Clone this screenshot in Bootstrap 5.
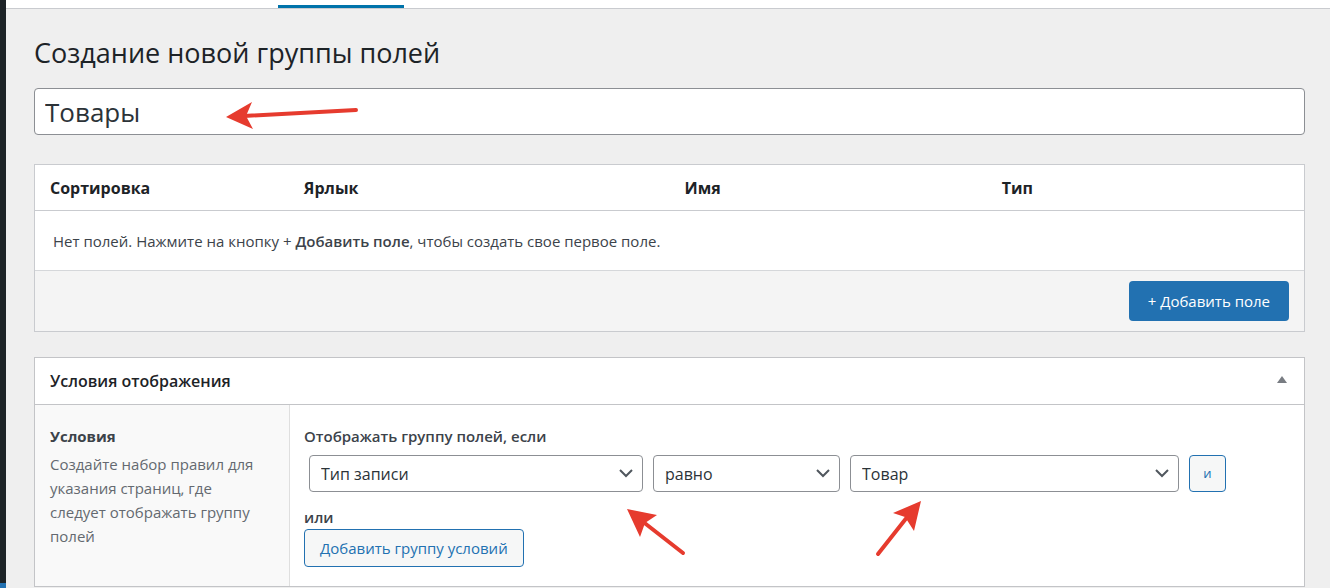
<!DOCTYPE html>
<html lang="ru">
<head>
<meta charset="utf-8">
<meta name="viewport" content="width=device-width, initial-scale=1">
<title>Создание новой группы полей</title>
<link href="https://cdn.jsdelivr.net/npm/bootstrap@5.3.0/dist/css/bootstrap.min.css" rel="stylesheet">
<style>
  body { font-family: "Open Sans", "Noto Sans", sans-serif; font-size: 15px; line-height: 24px; color: #3c434a; background: #efefef; }
  .admin-menu { width: 6px; background: #1d2327; }
  .admin-menu-current { height: 5px; background: #2271b1; }
  .admin-tabs { height: 9px; background: #fff; border-bottom: 1px solid #c9cbcf; padding-left: 272px; }
  .admin-tab { width: 126px; height: 3px; background: #0073aa; }
  .page-body { padding: 26px 25px 0 28px; }
  .page-title { font-size: 27px; line-height: 36px; font-weight: 400; color: #1d2327; margin: 0 0 17px; }
  .title-input { height: 47px; font-size: 26px; line-height: 32px; color: #2c3338; border: 1px solid #8c8f94; border-radius: 4px; padding: 4px 10px; }
  .panel { background: #fff; border: 1px solid #c9cbcf; }
  .panel-fields { margin: 29px 0 25px; }
  .field-table { table-layout: fixed; border-collapse: separate; border-spacing: 0; }
  .field-table th { height: 46px; padding: 0 15px; font-size: 16px; font-weight: 700; color: #1d2327; vertical-align: middle; border-bottom: 1px solid #c9cbcf; }
  .field-table td { height: 60px; padding: 0 18px; vertical-align: middle; border-bottom: 1px solid #d5d7da; }
  .panel-foot { background: #f4f4f4; padding: 10px 15px; }
  .btn-add { height: 40px; padding: 0 19px; background: #2271b1; border: 0; border-radius: 4px; color: #fff; font-size: 15px; }
  .btn-add:hover { background: #135e96; color: #fff; }
  .btn-line { height: 38px; padding: 0 15px; background: #f6f7f7; border: 1px solid #2271b1; border-radius: 4px; color: #2271b1; font-size: 15px; }
  .btn-and { width: 37px; height: 37px; padding: 0; font-size: 13px; }
  .panel-rules { border-color: #c3c4c7; }
  .panel-head { height: 47px; padding: 0 15px; border-bottom: 1px solid #c3c4c7; }
  .panel-head h2 { font-size: 16px; line-height: 24px; font-weight: 600; color: #1d2327; }
  .btn-toggle { color: #787c82; }
  .rule-help { width: 255px; background: #f9f9f9; border-right: 1px solid #dfdfdf; padding: 19px 24px 36px 15px; color: #646970; }
  .rule-help h3 { font-size: 15px; line-height: 24px; font-weight: 700; color: #3c434a; margin: 0 0 4px; }
  .rule-main { padding: 19px 15px 19px 14px; }
  .rule-caption { font-size: 15px; line-height: 24px; font-weight: 600; margin: 0; }
  .rule-row { display: grid; grid-template-columns: 344fr 197fr 339fr 47px 58px; margin: 7px 0 13px; }
  .rule-cell { padding: 0 5px; }
  .rule-cell .form-select { height: 37px; padding: 0 34px 0 11px; font-size: 16px; color: #2c3338; border: 1px solid #8c8f94; border-radius: 4px; background-image: none; }
  .chevron { top: 14px; right: 10px; pointer-events: none; }
  .pointer { pointer-events: none; fill: #e63b2e; stroke: none; overflow: visible; }
  .pointer line { stroke: #e63b2e; stroke-width: 4; stroke-linecap: round; }
  .pointer-title { left: 192px; top: 13px; }
  .pointer-type { right: -37px; top: 54px; }
  .pointer-value { left: 30px; top: 46px; }
</style>
</head>
<body>
<div class="d-flex min-vh-100">
  <aside class="admin-menu d-flex flex-column justify-content-end flex-shrink-0"><div class="admin-menu-current"></div></aside>
  <div class="flex-grow-1">
    <nav class="admin-tabs d-flex align-items-end"><div class="admin-tab"></div></nav>
    <main class="page-body">
      <h1 class="page-title">Создание новой группы полей</h1>
      <div class="position-relative">
        <input type="text" class="form-control title-input" value="Товары" aria-label="Название группы">
        <svg class="pointer pointer-title position-absolute" width="133" height="28" viewBox="0 0 133 28" aria-hidden="true"><line x1="18" y1="15" x2="130" y2="9"/><path d="M0 16 26 1 20 15 27 28Z"/></svg>
      </div>

      <section class="panel panel-fields">
        <table class="field-table w-100">
          <colgroup><col style="width:20%"><col style="width:30%"><col style="width:25%"><col style="width:25%"></colgroup>
          <thead><tr><th>Сортировка</th><th>Ярлык</th><th>Имя</th><th>Тип</th></tr></thead>
          <tbody><tr><td colspan="4">Нет полей. Нажмите на кнопку + <strong class="fw-semibold">Добавить поле</strong>, чтобы создать свое первое поле.</td></tr></tbody>
        </table>
        <div class="panel-foot d-flex justify-content-end">
          <button type="button" class="btn btn-add">+ Добавить поле</button>
        </div>
      </section>

      <section class="panel panel-rules">
        <header class="panel-head d-flex align-items-center justify-content-between">
          <h2 class="m-0">Условия отображения</h2>
          <button type="button" class="btn btn-toggle border-0 p-0 d-flex" aria-label="Свернуть"><svg width="14" height="12" viewBox="0 0 14 12" aria-hidden="true"><path d="M7 1 12 8H2Z" fill="currentColor"/></svg></button>
        </header>
        <div class="d-flex">
          <div class="rule-help flex-shrink-0">
            <h3>Условия</h3>
            <p class="m-0">Создайте набор правил для указания страниц, где следует отображать группу полей</p>
          </div>
          <div class="rule-main flex-grow-1">
            <h4 class="rule-caption">Отображать группу полей, если</h4>
            <div class="rule-row">
              <div class="rule-cell position-relative">
                <div class="position-relative">
                  <select class="form-select" aria-label="Параметр"><option>Тип записи</option></select>
                  <svg class="chevron position-absolute" width="14" height="9" viewBox="0 0 14 9" aria-hidden="true"><path d="M1 1 7 7 13 1" fill="none" stroke="#50575e" stroke-width="2"/></svg>
                </div>
                <svg class="pointer pointer-type position-absolute" width="58" height="46" viewBox="0 0 58 46" aria-hidden="true"><line x1="15" y1="12" x2="56" y2="44"/><path d="M0 0 30 6 18 14 13 28Z"/></svg>
              </div>
              <div class="rule-cell">
                <div class="position-relative">
                  <select class="form-select" aria-label="Оператор"><option>равно</option></select>
                  <svg class="chevron position-absolute" width="14" height="9" viewBox="0 0 14 9" aria-hidden="true"><path d="M1 1 7 7 13 1" fill="none" stroke="#50575e" stroke-width="2"/></svg>
                </div>
              </div>
              <div class="rule-cell position-relative">
                <div class="position-relative">
                  <select class="form-select" aria-label="Значение"><option>Товар</option></select>
                  <svg class="chevron position-absolute" width="14" height="9" viewBox="0 0 14 9" aria-hidden="true"><path d="M1 1 7 7 13 1" fill="none" stroke="#50575e" stroke-width="2"/></svg>
                </div>
                <svg class="pointer pointer-value position-absolute" width="48" height="56" viewBox="0 0 48 56" aria-hidden="true"><line x1="33" y1="15" x2="3" y2="53"/><path d="M46 0 18 12 30 16 39 30Z"/></svg>
              </div>
              <div class="rule-cell"><button type="button" class="btn btn-line btn-and">и</button></div>
            </div>
            <h4 class="rule-caption">или</h4>
            <button type="button" class="btn btn-line">Добавить группу условий</button>
          </div>
        </div>
      </section>
    </main>
  </div>
</div>
<script src="https://cdn.jsdelivr.net/npm/bootstrap@5.3.0/dist/js/bootstrap.bundle.min.js"></script>
</body>
</html>
